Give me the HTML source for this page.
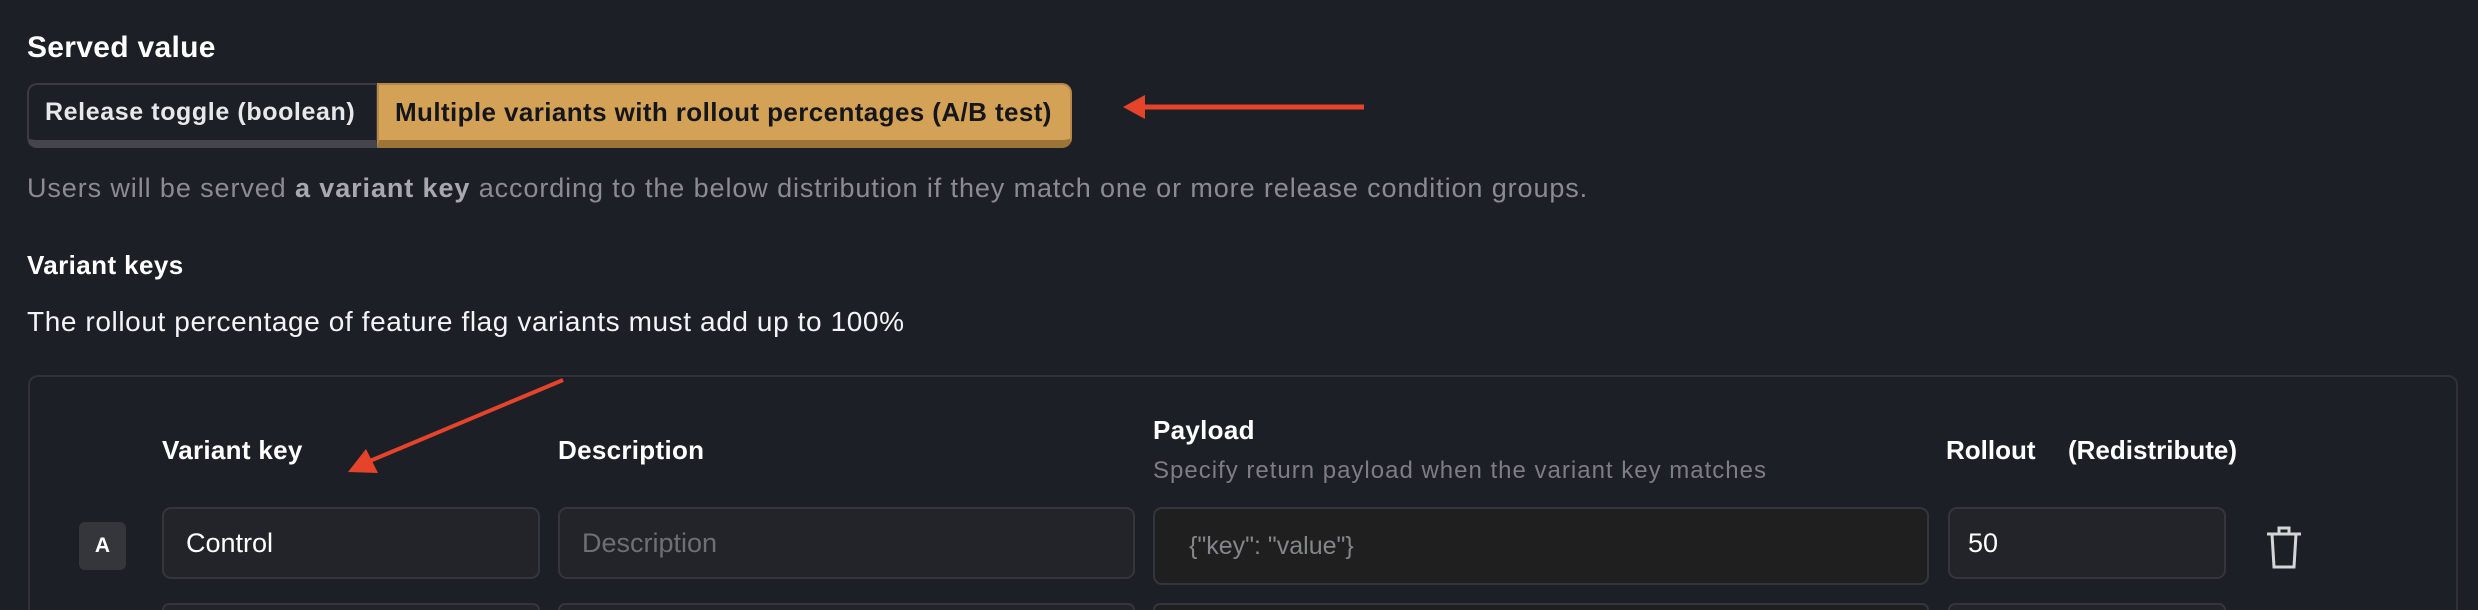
<!DOCTYPE html>
<html style="height:610px;overflow:hidden"><head><style>
html,body{margin:0;width:2478px;height:610px;overflow:hidden;background:#1d1f27}
#w{position:relative;width:2478px;height:610px;overflow:hidden;font-family:"Liberation Sans",sans-serif;color:#fff}
.a{position:absolute;white-space:nowrap}
.inp{position:absolute;background:#232429;border:2px solid #35363c;border-radius:9px;box-sizing:border-box;font-size:27px;display:flex;align-items:center;padding-left:22px}
.r2{border-bottom:0;border-radius:9px 9px 0 0;height:7px;top:603px;padding:0}
</style></head><body><div id="w">
<div class="a" style="left:27px;top:31px;font-size:30px;font-weight:bold;letter-spacing:0.3px">Served value</div>
<div class="a" style="left:27px;top:83px;width:351px;height:65px;box-sizing:border-box;border:2px solid #3a3b40;border-radius:10px 0 0 10px;border-bottom:8px solid #45464b;background:#1d1f27;font-size:25px;font-weight:bold;color:#e8e8ea;display:flex;align-items:center;padding-left:16px;letter-spacing:0.6px">Release toggle (boolean)</div>
<div class="a" style="left:377px;top:83px;width:695px;height:65px;box-sizing:border-box;border:2px solid #b8884a;border-radius:0 10px 10px 0;border-bottom:8px solid #9c7438;background:#d4a256;font-size:26px;font-weight:bold;color:#15161a;display:flex;align-items:center;padding-left:16px;letter-spacing:0.4px">Multiple variants with rollout percentages (A/B test)</div>
<svg class="a" style="left:1115px;top:93px" width="260" height="30"><line x1="20" y1="14" x2="249" y2="14" stroke="#e5432a" stroke-width="5"/><polygon points="8,14 30,2 30,26" fill="#e5432a"/></svg>
<div class="a" style="left:27px;top:173px;font-size:27px;color:#8b8c92;letter-spacing:0.9px">Users will be served <b style="color:#a8a9ae">a variant key</b> according to the below distribution if they match one or more release condition groups.</div>
<div class="a" style="left:27px;top:250px;font-size:26px;font-weight:bold;letter-spacing:0.4px">Variant keys</div>
<div class="a" style="left:27px;top:306px;font-size:28px;color:#f4f4f6;letter-spacing:0.6px">The rollout percentage of feature flag variants must add up to 100%</div>
<div class="a" style="left:28px;top:375px;width:2430px;height:235px;box-sizing:border-box;border:2px solid #303138;border-bottom:0;border-radius:10px 10px 0 0"></div>
<div class="a" style="left:162px;top:435px;font-size:26px;font-weight:bold;letter-spacing:0.3px">Variant key</div>
<div class="a" style="left:558px;top:435px;font-size:26px;font-weight:bold;letter-spacing:0.3px">Description</div>
<div class="a" style="left:1153px;top:415px;font-size:26px;font-weight:bold;letter-spacing:0.3px">Payload</div>
<div class="a" style="left:1153px;top:457px;font-size:24px;color:#7d7e84;letter-spacing:1px">Specify return payload when the variant key matches</div>
<div class="a" style="left:1946px;top:435px;font-size:26px;font-weight:bold">Rollout</div>
<div class="a" style="left:2068px;top:435px;font-size:26px;font-weight:bold">(Redistribute)</div>
<div class="a" style="left:79px;top:522px;width:47px;height:48px;background:#35363b;border-radius:6px;font-size:21px;font-weight:bold;display:flex;align-items:center;justify-content:center">A</div>
<div class="inp" style="left:162px;top:507px;width:378px;height:72px">Control</div>
<div class="inp" style="left:558px;top:507px;width:577px;height:72px;color:#6e6f74">Description</div>
<div class="inp" style="left:1153px;top:507px;width:776px;height:78px;background:#1f1f1f;color:#85868a;font-size:25px;padding-left:34px">{"key": "value"}</div>
<div class="inp" style="left:1948px;top:507px;width:278px;height:72px;padding-left:18px">50</div>
<svg class="a" style="left:2264px;top:525px" width="40" height="44" viewBox="0 0 40 44" fill="none" stroke="#d5d5d8" stroke-width="3"><path d="M3 9H37M15 9V3H25V9M8 9L10 42H30L32 9"/></svg>
<div class="inp r2" style="left:162px;width:378px"></div>
<div class="inp r2" style="left:558px;width:577px"></div>
<div class="inp r2" style="left:1153px;width:776px;background:#1f1f1f"></div>
<div class="inp r2" style="left:1948px;width:278px"></div>
<svg class="a" style="left:330px;top:375px" width="250" height="110"><line x1="233" y1="5" x2="35" y2="88" stroke="#e5432a" stroke-width="4"/><polygon points="18,97 36,74 48,98" fill="#e5432a"/></svg>
</div></body></html>
